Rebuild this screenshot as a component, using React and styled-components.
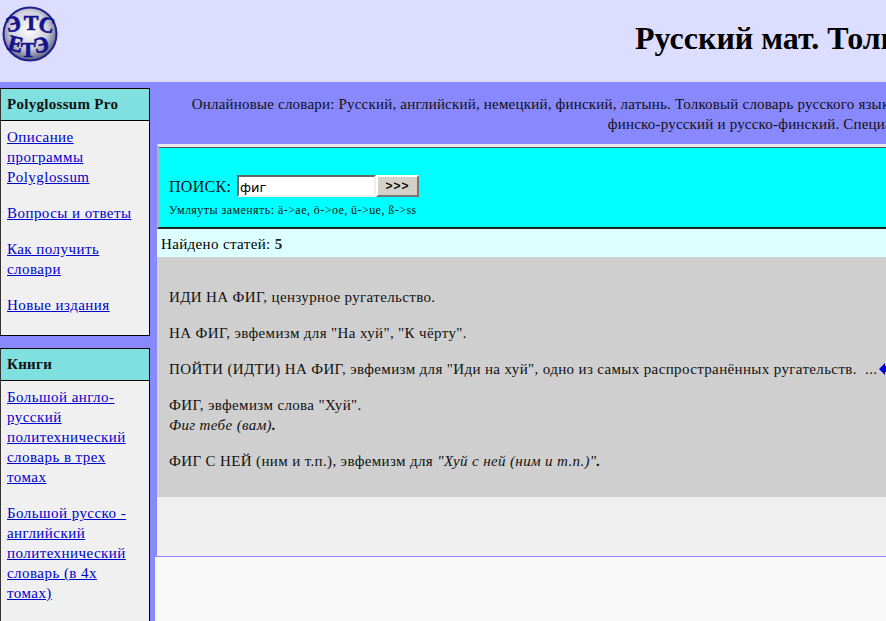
import React from "react";
import styled, { createGlobalStyle } from "styled-components";

const GlobalStyle = createGlobalStyle`
  html, body {
    margin: 0;
    padding: 0;
    height: 100%;
    overflow: hidden;
    background: #8888ff;
    font-family: "Liberation Serif", "Times New Roman", serif;
    font-size: 15px;
    color: #000;
  }
`;

const Page = styled.div`
  width: 1441px;
  height: 621px;
  overflow: hidden;
  display: flex;
  flex-direction: column;
`;

const Header = styled.header`
  height: 82px;
  flex: none;
  background: #ddddff;
  display: flex;
  align-items: flex-start;
  padding: 6px 0 0 2px;
  box-sizing: border-box;
`;

const Title = styled.h1`
  margin: 13px 0 0 577px;
  font-size: 32px;
  line-height: 38px;
  font-weight: bold;
  white-space: nowrap;
`;

const Columns = styled.div`
  display: flex;
  flex: 1;
  min-height: 0;
`;

const Sidebar = styled.aside`
  width: 150px;
  flex: none;
  padding-top: 6px;
  display: flex;
  flex-direction: column;
  gap: 12px;
`;

const Panel = styled.section`
  border: 1px solid #000;
  border-left-color: #333;
  background: #f0f0f0;
`;

const PanelTitle = styled.h3`
  margin: 0;
  height: 31px;
  line-height: 31px;
  padding-left: 6px;
  background: #80e0e0;
  border-bottom: 1px solid #000;
  font-size: 15px;
  letter-spacing: 0.3px;
  font-weight: bold;
  color: #111;
`;

const PanelBody = styled.div`
  padding: 6px 6px 20px;
  display: flex;
  flex-direction: column;
  gap: 16px;
`;

const SideLink = styled.a`
  color: #0000cc;
  text-decoration: underline;
  font-size: 15px;
  letter-spacing: 0.45px;
  line-height: 20px;
`;

const Main = styled.main`
  flex: 1;
  margin-left: 5px;
  min-width: 0;
  display: flex;
  flex-direction: column;
`;

const Intro = styled.div`
  height: 62px;
  flex: none;
  padding-top: 12px;
  box-sizing: border-box;
  text-align: center;
  font-size: 15px;
  letter-spacing: 0.2px;
  line-height: 20px;
  white-space: nowrap;
  color: #111;
`;

const Content = styled.div`
  flex: 1;
  background: #f9f9f9;
`;

const Frame = styled.div`
  height: 413px;
  box-sizing: border-box;
  background: #f0f0f0;
  border-left: 2px solid #8888ff;
  border-bottom: 1px solid #8888ff;
`;

const SearchBox = styled.form`
  height: 85px;
  box-sizing: border-box;
  margin: 0;
  background: #00ffff;
  padding: 28px 0 0 10px;
  border-style: solid;
  border-width: 3px 0 2px 2px;
  border-color: #e8e8e8 #e8e8e8 #222 #99bbbb;
  box-shadow: inset 0 1px 0 #555;
`;

const SearchRow = styled.div`
  display: flex;
  align-items: center;
  font-size: 16px;
  letter-spacing: 0.3px;
  color: #111;
`;

const SearchLabel = styled.label`
  width: 68px;
  flex: none;
  padding-top: 2px;
`;

const SearchInput = styled.input`
  width: 139px;
  height: 22px;
  box-sizing: border-box;
  padding: 2px 1px 0;
  border: 2px solid;
  border-color: #666 #eee #eee #666;
  background: #fff;
  font-family: "DejaVu Sans", sans-serif;
  font-size: 13px;
  outline: none;
`;

const SearchButton = styled.button`
  width: 43px;
  height: 22px;
  padding: 0;
  border: 2px solid;
  border-color: #fff #777 #777 #fff;
  background: #d4d0c8;
  font-family: "Liberation Sans", sans-serif;
  font-size: 12px;
  font-weight: bold;
  letter-spacing: 1px;
  color: #111;
`;

const Hint = styled.div`
  margin-top: 6px;
  font-size: 12px;
  letter-spacing: 0.45px;
  color: #111;
`;

const Found = styled.div`
  height: 28px;
  line-height: 30px;
  padding-left: 4px;
  background: #ddffff;
  font-size: 15px;
  letter-spacing: 0.36px;
`;

const Count = styled.b`
  color: #222;
`;

const Results = styled.div`
  height: 240px;
  box-sizing: border-box;
  padding: 30px 0 0 12px;
  background: #cfcfcf;
  font-size: 15px;
  letter-spacing: 0.36px;
  line-height: 20px;
  color: #111;
  white-space: nowrap;
`;

const Entry = styled.p`
  margin: 0 0 16px;
  display: flex;
  flex-direction: column;
`;

const EntryLine = styled.span`
  display: flex;
  align-items: center;
  white-space: pre;
`;

const Example = styled.span`
  font-style: italic;
  font-weight: ${({ $bold }) => ($bold ? "bold" : "normal")};
`;

const ArrowIcon = styled.svg`
  width: 14px;
  height: 12px;
  margin-left: 2px;
  flex: none;
`;

const sideOne = ["Описание программы Polyglossum", "Вопросы и ответы", "Как получить словари", "Новые издания"];
const sideTwo = [
  "Большой англо-русский политехнический словарь в трех томах",
  "Большой русско - английский политехнический словарь (в 4х томах)",
];

const logoLetters = [
  { ch: "Э", x: 13, y: 25, r: -14 },
  { ch: "Т", x: 29, y: 24, r: 0 },
  { ch: "С", x: 43, y: 26, r: 14 },
  { ch: "Е", x: 12, y: 45, r: 14 },
  { ch: "Т", x: 26, y: 51, r: 0 },
  { ch: "Э", x: 41, y: 46, r: -14 },
];

function Logo() {
  return (
    <svg width="56" height="56" viewBox="0 0 56 56">
      <defs>
        <radialGradient id="ball" cx="48%" cy="42%" r="58%">
          <stop offset="0%" stopColor="#ffffff" />
          <stop offset="60%" stopColor="#d0d0de" />
          <stop offset="100%" stopColor="#5c5c80" />
        </radialGradient>
      </defs>
      <circle cx="28" cy="28" r="26.5" fill="url(#ball)" stroke="#20208c" strokeWidth="2" />
      {logoLetters.map(l => (
        <text
          key={`${l.ch}${l.x}`}
          x={l.x}
          y={l.y}
          textAnchor="middle"
          transform={`rotate(${l.r} ${l.x} ${l.y})`}
          fontFamily="Liberation Serif"
          fontWeight="bold"
          fontSize="22"
          fill="#14148c"
          stroke="#14148c"
          strokeWidth="0.7"
        >
          {l.ch}
        </text>
      ))}
    </svg>
  );
}

export default function App() {
  return (
    <Page>
      <GlobalStyle />
      <Header>
        <Logo />
        <Title>Русский мат. Толковый словарь</Title>
      </Header>
      <Columns>
        <Sidebar>
          <Panel>
            <PanelTitle>Polyglossum Pro</PanelTitle>
            <PanelBody>
              {sideOne.map(t => (
                <SideLink key={t} href="#">{t}</SideLink>
              ))}
            </PanelBody>
          </Panel>
          <Panel>
            <PanelTitle>Книги</PanelTitle>
            <PanelBody>
              {sideTwo.map(t => (
                <SideLink key={t} href="#">{t}</SideLink>
              ))}
            </PanelBody>
          </Panel>
        </Sidebar>
        <Main>
          <Intro>
            Онлайновые словари: Русский, английский, немецкий, финский, латынь. Толковый словарь русского языка. Большие словари: англо-русский, русско-английский, немецко-русский и др
            <br />
            финско-русский и русско-финский. Специальные словари
          </Intro>
          <Content>
            <Frame>
              <SearchBox onSubmit={e => e.preventDefault()}>
                <SearchRow>
                  <SearchLabel>ПОИСК:</SearchLabel>
                  <SearchInput defaultValue="фиг" />
                  <SearchButton type="button">&gt;&gt;&gt;</SearchButton>
                </SearchRow>
                <Hint>Умляуты заменять: ä-&gt;ae, ö-&gt;oe, ü-&gt;ue, ß-&gt;ss</Hint>
              </SearchBox>
              <Found>Найдено статей: <Count>5</Count></Found>
              <Results>
                <Entry>ИДИ НА ФИГ, цензурное ругательство.</Entry>
                <Entry>НА ФИГ, эвфемизм для "На хуй", "К чёрту".</Entry>
                <Entry>
                  <EntryLine>
                    ПОЙТИ (ИДТИ) НА ФИГ, эвфемизм для "Иди на хуй", одно из самых распространённых ругательств.  ...
                    <ArrowIcon viewBox="0 0 14 12">
                      <path d="M0 6 L6 0 V3 H14 V9 H6 V12 Z" fill="#0000dd" />
                    </ArrowIcon>
                  </EntryLine>
                </Entry>
                <Entry>
                  ФИГ, эвфемизм слова "Хуй".
                  <span>
                    <Example>Фиг тебе (вам)</Example>
                    <Example $bold>.</Example>
                  </span>
                </Entry>
                <Entry>
                  <span>
                    ФИГ С НЕЙ (ним и т.п.), эвфемизм для <Example>"Хуй с ней (ним и т.п.)"</Example>
                    <Example $bold>.</Example>
                  </span>
                </Entry>
              </Results>
            </Frame>
          </Content>
        </Main>
      </Columns>
    </Page>
  );
}
